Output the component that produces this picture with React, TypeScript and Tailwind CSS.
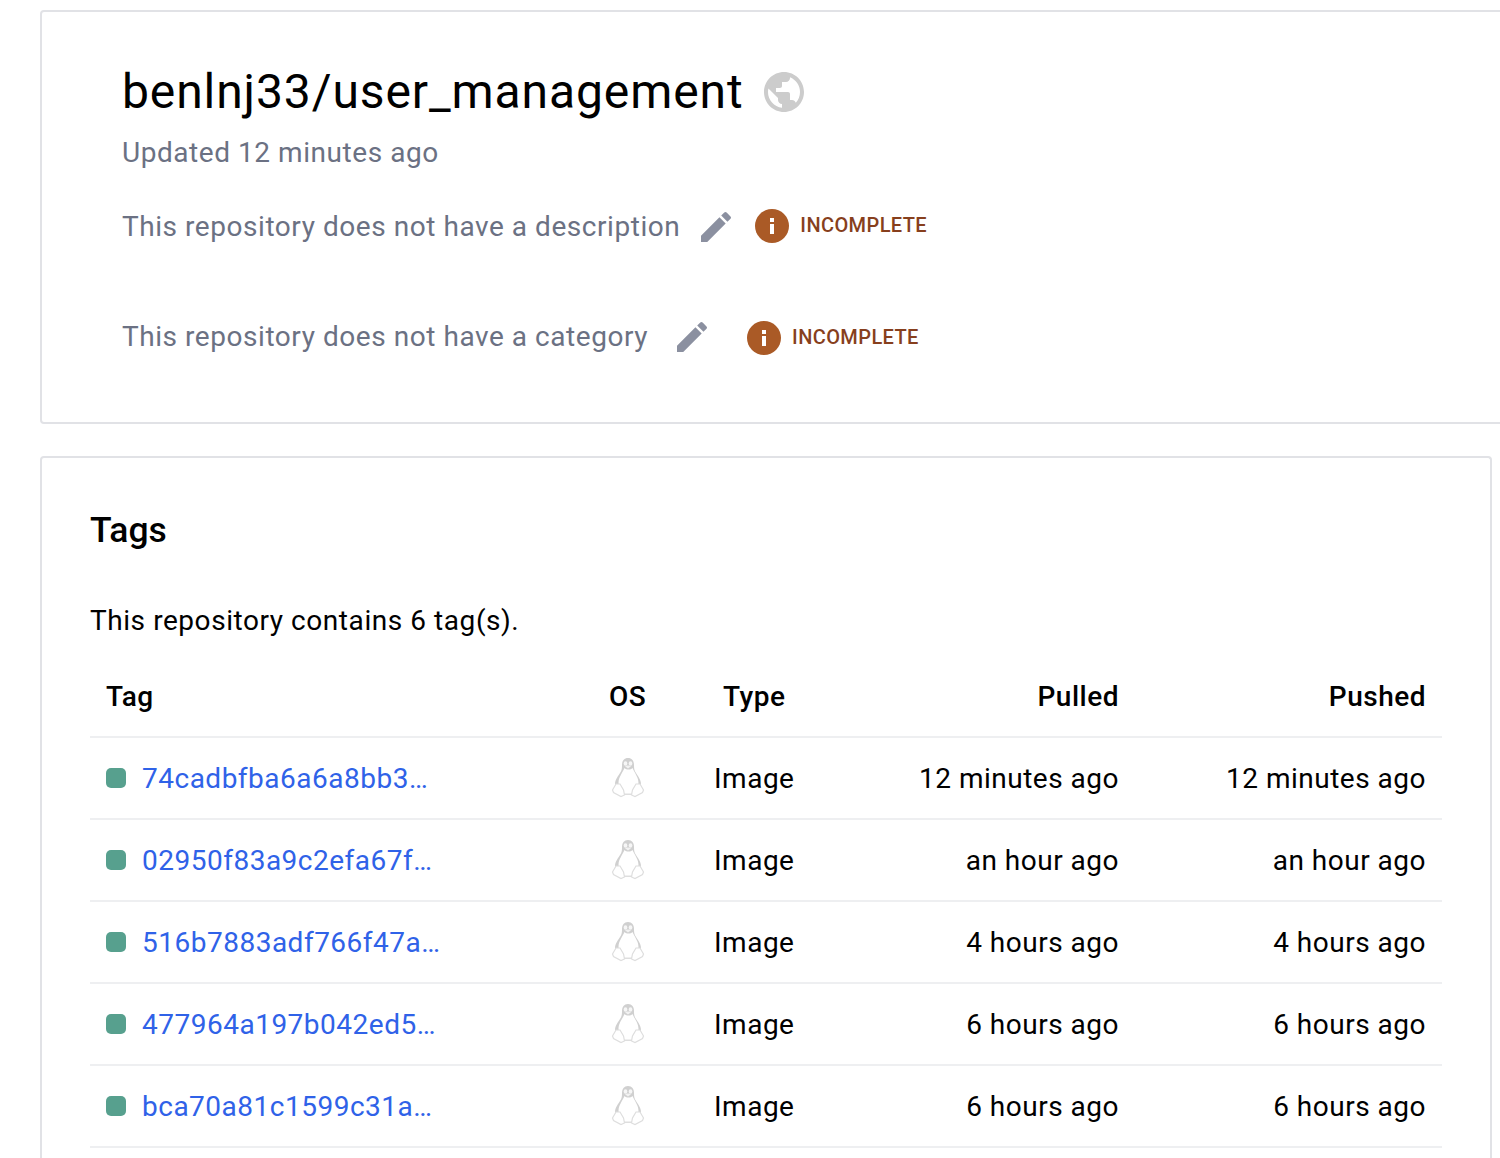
import React from "react";
import { MdEdit, MdPublic } from "react-icons/md";

const font = { fontFamily: "Roboto, sans-serif" };

function Tux() {
  return (
    <svg width="34" height="42" viewBox="0 0 34 42" fill="none">
      <path d="M17 1c-4 0-6 3-6 7 0 3 0 5-2 8-2 3-5 7-5 11 0 3 2 6 4 7h18c2-1 4-4 4-7 0-4-3-8-5-11-2-3-2-5-2-8 0-4-2-7-6-7z" fill="#d0d0d0" />
      <path d="M13.5 11c-2 5-6 9-6 15 0 3 1 6 4 8h12c3-2 4-5 4-8 0-6-4-10-6-15-2 2-6 2-8 0z" fill="#fff" />
      <ellipse cx="14.5" cy="6.5" rx="1.8" ry="2.2" fill="#f6f6f6" />
      <ellipse cx="19.5" cy="6.5" rx="1.8" ry="2.2" fill="#f6f6f6" />
      <path d="M14 9.2c1.5-1 4.5-1 6 0l-3 2.3z" fill="#f2f2f2" />
      <path d="M5 27L1.5 33l1 2.5 7.5 4 3.5-1.5-1-5-3.5-6z" fill="#fff" stroke="#dedede" strokeWidth="1.2" />
      <path d="M29 27l3.5 6-1 2.5-7.5 4-3.5-1.5 1-5 3.5-6z" fill="#fff" stroke="#dedede" strokeWidth="1.2" />
      <path d="M13 36.5h8v1.5h-8z" fill="#dedede" />
    </svg>
  );
}

function Incomplete() {
  return (
    <div className="flex items-center gap-[11px]">
      <div className="w-[34px] h-[34px] rounded-full bg-[#aa5a26] flex flex-col items-center justify-center">
        <div className="w-[4px] h-[4px] bg-white mb-[2px]" />
        <div className="w-[4px] h-[10px] bg-white" />
      </div>
      <span className="text-[20px] font-medium text-[#873f1d] tracking-[0.4px] -mt-[2px]">INCOMPLETE</span>
    </div>
  );
}

const rows = [
  ["74cadbfba6a6a8bb3…", "12 minutes ago"],
  ["02950f83a9c2efa67f…", "an hour ago"],
  ["516b7883adf766f47a…", "4 hours ago"],
  ["477964a197b042ed5…", "6 hours ago"],
  ["bca70a81c1599c31a…", "6 hours ago"],
];

const cols = "grid grid-cols-[503px_114px_1fr_308px_308px] items-center";

export default function App() {
  return (
    <div className="h-[1158px] w-[1500px] overflow-hidden bg-white pt-[10px] pl-[40px] text-black" style={font}>
      <section className="w-[1480px] h-[414px] border-2 border-[#e1e2e6] rounded-[4px] pl-[80px] pt-[50px]">
        <div className="flex items-center h-[60px]">
          <h1 className="text-[48px] font-normal tracking-[0.9px] leading-[60px]">benlnj33/user_management</h1>
          <MdPublic className="ml-[16px] text-[#cccccc]" size={48} />
        </div>
        <p className="mt-[11px] text-[28px] leading-[40px] text-[#6b7183] tracking-[0.55px]">Updated 12 minutes ago</p>
        <div className="mt-[34px] flex items-center h-[40px]">
          <span className="text-[28px] text-[#6b7183] tracking-[0.55px]">This repository does not have a description</span>
          <MdEdit className="ml-[16px] text-[#8b90a0]" size={40} />
          <div className="ml-[19px] -mt-[2px]"><Incomplete /></div>
        </div>
        <div className="mt-[70px] flex items-center h-[40px]">
          <span className="text-[28px] text-[#6b7183] tracking-[0.55px]">This repository does not have a category</span>
          <MdEdit className="ml-[24px] text-[#8b90a0]" size={40} />
          <div className="ml-[35px] mt-[2px]"><Incomplete /></div>
        </div>
      </section>
      <section className="mt-[32px] w-[1452px] h-[800px] border-2 border-b-0 border-[#e1e2e6] rounded-t-[4px] pl-[48px] pr-[48px] pt-[50px]">
        <h2 className="text-[35.5px] font-medium leading-[44px]">Tags</h2>
        <p className="mt-[49px] text-[28px] leading-[40px] tracking-[0.56px]">This repository contains 6 tag(s).</p>
        <div className="mt-[17px] text-[28px] tracking-[0.5px]">
          <div className={`${cols} h-[80px] border-b-2 border-[#eeeff1] font-medium`}>
            <div className="pl-[16px]">Tag</div>
            <div className="pl-[16px]">OS</div>
            <div className="pl-[16px]">Type</div>
            <div className="text-right pr-[15px]">Pulled</div>
            <div className="text-right pr-[16px]">Pushed</div>
          </div>
          {rows.map(([tag, t]) => (
            <div key={tag} className={`${cols} h-[82px] border-b-2 border-[#eeeff1]`}>
              <div className="pl-[16px] flex items-center gap-[16px]">
                <span className="w-[20px] h-[20px] rounded-[5px] bg-[#57a08e]" />
                <span className="text-[#2f62e8] pt-[2px]">{tag}</span>
              </div>
              <div className="pl-[18px]"><Tux /></div>
              <div className="pl-[7px] pt-[2px]">Image</div>
              <div className="text-right pr-[15px] pt-[2px]">{t}</div>
              <div className="text-right pr-[16px] pt-[2px]">{t}</div>
            </div>
          ))}
        </div>
      </section>
    </div>
  );
}
